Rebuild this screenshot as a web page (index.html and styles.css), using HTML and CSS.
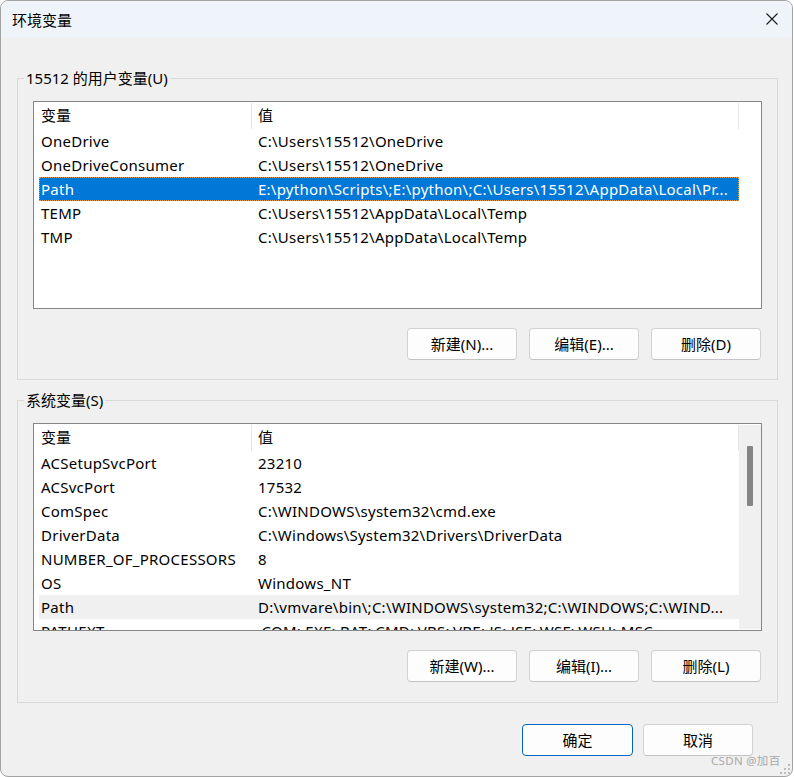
FILE: index.html
```html
<!DOCTYPE html>
<html lang="zh-CN">
<head>
<meta charset="utf-8">
<title>环境变量</title>
<link rel="stylesheet" href="styles.css">
</head>
<body>
<div class="window">
  <div class="titlebar">
    <span class="title">环境变量</span>
    <svg class="close" width="12" height="12" viewBox="0 0 12 12"><path d="M0.5 0.5 L11.5 11.5 M11.5 0.5 L0.5 11.5" stroke="#1b1b1b" stroke-width="1.1" fill="none"/></svg>
  </div>
  <div class="content">
    <fieldset class="group group-user">
      <legend>15512 的用户变量(U)</legend>
      <div class="list">
        <div class="list-main">
          <div class="list-head"><div class="hcell c1">变量</div><div class="hcell c2">值</div></div>
          <div class="row"><span class="cell">OneDrive</span><span class="cell">C:\Users\15512\OneDrive</span></div>
          <div class="row"><span class="cell">OneDriveConsumer</span><span class="cell">C:\Users\15512\OneDrive</span></div>
          <div class="row selected"><span class="cell">Path</span><span class="cell">E:\python\Scripts\;E:\python\;C:\Users\15512\AppData\Local\Pr...</span></div>
          <div class="row"><span class="cell">TEMP</span><span class="cell">C:\Users\15512\AppData\Local\Temp</span></div>
          <div class="row"><span class="cell">TMP</span><span class="cell">C:\Users\15512\AppData\Local\Temp</span></div>
        </div>
        <div class="gutter"></div>
      </div>
      <div class="btn-row">
        <button class="btn">新建(N)...</button>
        <button class="btn">编辑(E)...</button>
        <button class="btn">删除(D)</button>
      </div>
    </fieldset>
    <fieldset class="group group-sys">
      <legend>系统变量(S)</legend>
      <div class="list">
        <div class="list-main">
          <div class="list-head"><div class="hcell c1">变量</div><div class="hcell c2">值</div></div>
          <div class="row"><span class="cell">ACSetupSvcPort</span><span class="cell">23210</span></div>
          <div class="row"><span class="cell">ACSvcPort</span><span class="cell">17532</span></div>
          <div class="row"><span class="cell">ComSpec</span><span class="cell">C:\WINDOWS\system32\cmd.exe</span></div>
          <div class="row"><span class="cell">DriverData</span><span class="cell">C:\Windows\System32\Drivers\DriverData</span></div>
          <div class="row"><span class="cell">NUMBER_OF_PROCESSORS</span><span class="cell">8</span></div>
          <div class="row"><span class="cell">OS</span><span class="cell">Windows_NT</span></div>
          <div class="row inactive"><span class="cell">Path</span><span class="cell">D:\vmvare\bin\;C:\WINDOWS\system32;C:\WINDOWS;C:\WIND...</span></div>
          <div class="row"><span class="cell">PATHEXT</span><span class="cell">.COM;.EXE;.BAT;.CMD;.VBS;.VBE;.JS;.JSE;.WSF;.WSH;.MSC</span></div>
        </div>
        <div class="gutter scrollbar"><div class="thumb"></div></div>
      </div>
      <div class="btn-row">
        <button class="btn">新建(W)...</button>
        <button class="btn">编辑(I)...</button>
        <button class="btn">删除(L)</button>
      </div>
    </fieldset>
    <div class="dialog-btns">
      <button class="btn default">确定</button>
      <button class="btn">取消</button>
    </div>
  </div>
  <div class="watermark">CSDN @加百</div>
  <svg class="grip" width="12" height="12" viewBox="0 0 12 12">
    <rect x="9" y="1" width="2" height="2"/>
    <rect x="5" y="5" width="2" height="2"/><rect x="9" y="5" width="2" height="2"/>
    <rect x="1" y="9" width="2" height="2"/><rect x="5" y="9" width="2" height="2"/><rect x="9" y="9" width="2" height="2"/>
  </svg>
</div>
</body>
</html>
```

FILE: styles.css
```css
* { box-sizing: border-box; }
html, body { margin: 0; padding: 0; background: #ffffff; }
body {
  font-family: "Noto Sans", "Noto Sans CJK SC", sans-serif;
  font-size: 15px;
  color: #000;
}
.window {
  position: relative;
  width: 793px;
  height: 777px;
  border: 1px solid #a3a3a3;
  border-radius: 8px;
  overflow: hidden;
  background: #f0f0f0;
}
.titlebar {
  height: 37px;
  background: #eef4f9;
  display: flex;
  align-items: center;
  justify-content: space-between;
  padding: 0 14px 0 11px;
}
.title {
  font-family: "Noto Sans CJK SC", sans-serif;
  font-size: 15px;
  line-height: 20px;
}
.close { display: block; margin-top: -1px; }
.content { display: flex; flex-direction: column; }
.group {
  margin: 30px 14px 0 16px;
  padding: 0 15px 19px 15px;
  border: 1px solid #d9d9d9;
  min-width: 0;
}
.group-sys { margin-top: 10px; padding-bottom: 20px; }
.group legend {
  padding: 0 2px;
  margin-left: -9px;
  line-height: 20px;
  font-size: 15px;
}
.list {
  margin-top: 13px;
  height: 208px;
  border: 1px solid #868686;
  background: #fff;
  display: flex;
  overflow: hidden;
}
.list-main { flex: 1; min-width: 0; overflow: hidden; }
.list-head { display: flex; height: 27px; }
.hcell {
  height: 26px;
  margin-top: 1px;
  line-height: 24px;
  border-right: 1px solid #e5e5e5;
  white-space: nowrap;
}
.hcell.c1 { width: 218px; padding-left: 7px; }
.hcell.c2 { flex: 1; padding-left: 6px; }
.row {
  margin-left: 5px;
  height: 24px;
  line-height: 24px;
  display: grid;
  grid-template-columns: 217px 1fr;
  white-space: nowrap;
  letter-spacing: 0.25px;
}
.cell { padding-left: 2px; overflow: hidden; }
.row.selected {
  background: #0078d7;
  color: #fff;
  outline: 1px dotted #e39a52;
  outline-offset: -1px;
}
.row.inactive { background: #f0f0f0; }
.gutter { width: 22px; flex: none; }
.scrollbar { background: #f0f0f0; position: relative; margin: 1px 0; }
.thumb {
  position: absolute;
  left: 8px;
  top: 21px;
  width: 6px;
  height: 60px;
  background: #858585;
  border-radius: 1px;
}
.btn-row {
  display: flex;
  justify-content: flex-end;
  gap: 12px;
  margin-top: 19px;
  padding-right: 1px;
}
.btn {
  font: inherit;
  font-size: 15px;
  width: 110px;
  height: 32px;
  padding: 0;
  background: #fdfdfd;
  border: 1px solid #d2d2d2;
  border-bottom-color: #c3c3c3;
  border-radius: 4px;
  color: #000;
  line-height: 28px;
}
.btn.default { border: 1px solid #0067c0; width: 111px; }
.dialog-btns {
  display: flex;
  justify-content: flex-end;
  gap: 10px;
  margin-top: 21px;
  padding-right: 39px;
}
.watermark {
  position: absolute;
  left: 710px;
  top: 752px;
  font-size: 11.5px;
  line-height: 16px;
  color: #a9a9a9;
  letter-spacing: 0.3px;
}
.grip {
  position: absolute;
  right: 1px;
  bottom: 1px;
  fill: #bdbdbd;
}
```
